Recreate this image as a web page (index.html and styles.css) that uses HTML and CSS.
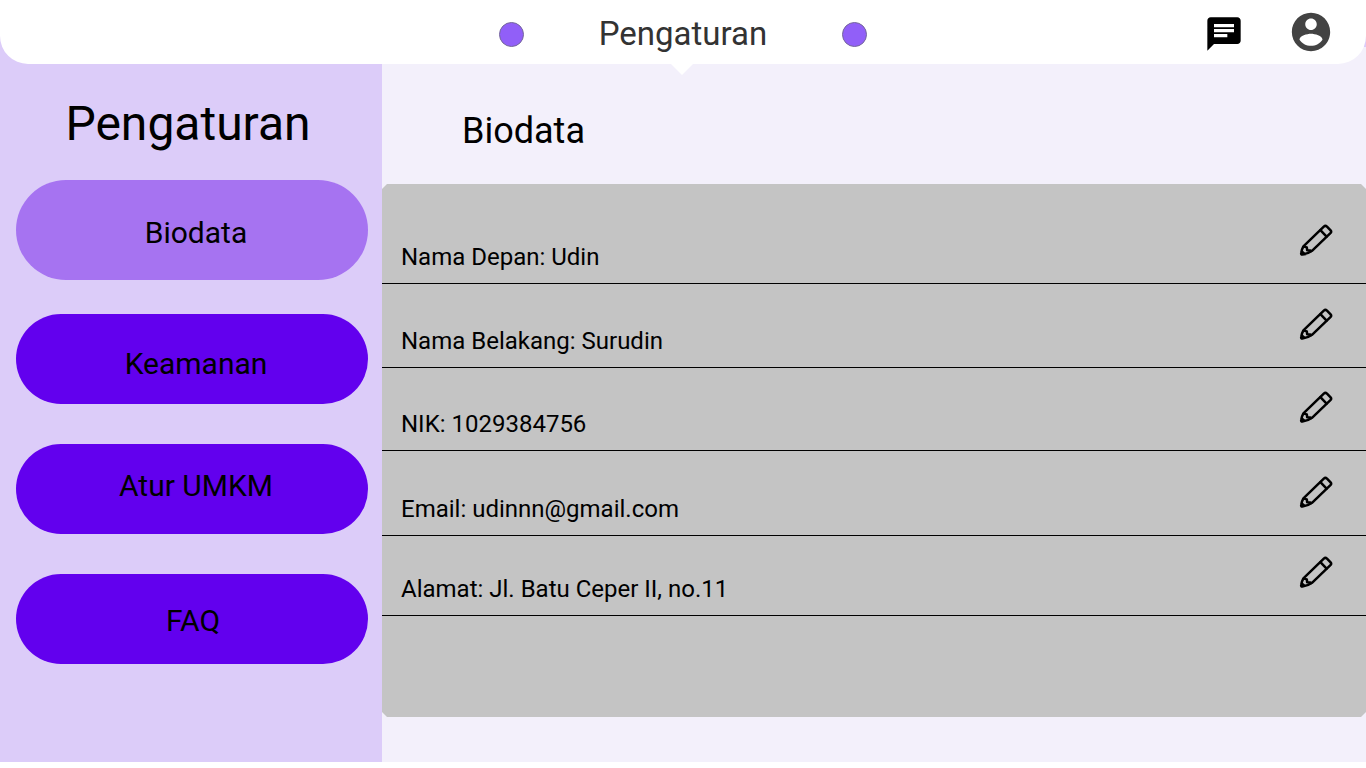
FILE: index.html
```html
<!DOCTYPE html>
<html lang="id">
<head>
<meta charset="utf-8">
<meta name="viewport" content="width=device-width, initial-scale=1">
<title>Pengaturan</title>
<link rel="stylesheet" href="styles.css">
</head>
<body>
<svg class="sprite" aria-hidden="true">
  <symbol id="pencil" viewBox="0 0 34 34">
    <g fill="none" stroke="currentColor" stroke-width="2.5" stroke-linejoin="round" stroke-linecap="round">
      <path d="M4.400 23.400 24.800 3.600Q26.400 2.200 28 3.600L31.600 7.400Q32.800 8.800 31.400 10.200L13 27.800Q8.600 31 3.400 31.600Q1.900 31.700 2.200 30Q2.600 26.600 4.400 23.400Z"/>
      <path d="M21.400 7.200 27.600 13.600M5 23.600 7.800 24.400 8.200 27.200 11.400 27.600 12 28.200"/>
    </g>
    <path d="M2 31.600 3.200 27 7 30.800Z" fill="currentColor"/>
  </symbol>
</svg>
<div class="page">
  <header class="topbar">
    <nav class="topnav" aria-label="Halaman">
      <button class="dot" type="button" aria-label="Sebelumnya"></button>
      <span class="topnav-title">Pengaturan</span>
      <button class="dot" type="button" aria-label="Berikutnya"></button>
    </nav>
    <div class="actions">
      <button class="icon-button" type="button" aria-label="Pesan">
        <svg class="icon-chat" viewBox="0 0 24 24"><path fill="currentColor" d="M20 2H4c-1.100 0-1.990.9-1.990 2L2 22l4-4h14c1.100 0 2-.9 2-2V4c0-1.100-.9-2-2-2zM6 9h12v2H6V9zm8 5H6v-2h8v2zm4-6H6V6h12v2z"/></svg>
      </button>
      <button class="icon-button" type="button" aria-label="Akun">
        <svg class="icon-account" viewBox="0 0 24 24"><path fill="currentColor" d="M12 2C6.480 2 2 6.480 2 12s4.480 10 10 10 10-4.480 10-10S17.520 2 12 2zm0 3c1.660 0 3 1.340 3 3s-1.340 3-3 3-3-1.340-3-3 1.340-3 3-3zm0 14.200c-2.500 0-4.710-1.280-6-3.220.03-1.990 4-3.080 6-3.080 1.990 0 5.970 1.090 6 3.080-1.290 1.940-3.500 3.220-6 3.220z"/></svg>
      </button>
    </div>
  </header>
  <div class="body">
    <aside class="sidebar">
      <h1 class="sidebar-title">Pengaturan</h1>
      <nav class="menu" aria-label="Pengaturan">
        <button class="menu-item menu-item-active" type="button" aria-current="page">Biodata</button>
        <button class="menu-item menu-item-low" type="button">Keamanan</button>
        <button class="menu-item menu-item-high" type="button">Atur UMKM</button>
        <button class="menu-item menu-item-short" type="button">FAQ</button>
      </nav>
    </aside>
    <main class="content">
      <h2 class="content-title">Biodata</h2>
      <ul class="panel">
        <li class="row"><span>Nama Depan: Udin</span><button class="edit" type="button" aria-label="Ubah nama depan"><svg class="icon-pencil"><use href="#pencil"/></svg></button></li>
        <li class="row"><span>Nama Belakang: Surudin</span><button class="edit" type="button" aria-label="Ubah nama belakang"><svg class="icon-pencil"><use href="#pencil"/></svg></button></li>
        <li class="row"><span>NIK: 1029384756</span><button class="edit" type="button" aria-label="Ubah NIK"><svg class="icon-pencil"><use href="#pencil"/></svg></button></li>
        <li class="row"><span>Email: udinnn@gmail.com</span><button class="edit" type="button" aria-label="Ubah email"><svg class="icon-pencil"><use href="#pencil"/></svg></button></li>
        <li class="row"><span>Alamat: Jl. Batu Ceper II, no.11</span><button class="edit" type="button" aria-label="Ubah alamat"><svg class="icon-pencil"><use href="#pencil"/></svg></button></li>
      </ul>
    </main>
  </div>
</div>
</body>
</html>
```
FILE: styles.css
```css
* { box-sizing: border-box; }

body {
  margin: 0;
  background: #fff;
  color: #000;
  font-family: Roboto, "Liberation Sans", sans-serif;
}

button {
  padding: 0;
  border: 0;
  background: none;
  color: inherit;
  font: inherit;
  cursor: pointer;
}

svg { display: block; }

.sprite {
  position: absolute;
  width: 0;
  height: 0;
}

.page { background: #dcccf9; }

.topbar {
  position: relative;
  z-index: 1;
  display: grid;
  grid-template-columns: 1fr 368px 1fr;
  align-items: center;
  height: 64px;
  background: #fff;
  border-radius: 0 0 28px 28px;
}

/* Pointer below the current page title */
.topbar::after {
  content: "";
  position: absolute;
  top: 100%;
  left: 50%;
  width: 22px;
  height: 11px;
  margin-left: -12px;
  background: #fff;
  clip-path: polygon(0 0, 100% 0, 50% 100%);
}

.topnav {
  grid-column: 2;
  display: flex;
  align-items: center;
  justify-content: space-between;
  padding-top: 4px;
}

.topnav-title {
  color: #333;
  font-size: 33px;
  line-height: 40px;
}

.dot {
  width: 25px;
  height: 25px;
  border: 1px solid #75689a;
  border-radius: 50%;
  background: #915ff8;
}

.actions {
  display: flex;
  align-items: center;
  justify-content: flex-end;
  gap: 44px;
  padding-right: 32px;
}

.icon-chat {
  width: 40px;
  height: 40px;
  margin-top: 4px;
}

.icon-account {
  width: 46px;
  height: 46px;
  color: #434343;
}

.body { display: flex; }

.sidebar {
  flex: 0 0 382px;
  padding: 32px 14px 98px 16px;
}

.sidebar-title {
  margin: 0 0 28px;
  padding-right: 8px;
  font-size: 48px;
  font-weight: 400;
  line-height: 56px;
  text-align: center;
}

.menu {
  display: flex;
  flex-direction: column;
  gap: 40px;
}

.menu-item {
  height: 90px;
  padding: 4px 0 0 8px;
  border-radius: 50px;
  background: #6200ee;
  font-size: 30px;
  line-height: 36px;
}

.menu-item-active {
  height: 100px;
  margin-bottom: -6px;
  padding-top: 6px;
  background: #a673f1;
}

.menu-item-low { padding-top: 10px; }

.menu-item-high { padding: 0 0 6px 8px; }

.menu-item-short { padding-left: 2px; }

.content {
  flex: 1;
  min-width: 0;
  margin-top: -17px;
  padding: 62px 0 45px;
  background: #f3f0fb;
}

.content-title {
  margin: 0 0 31px;
  padding-left: 80px;
  font-size: 36px;
  font-weight: 400;
  line-height: 44px;
}

.panel {
  display: grid;
  grid-template-rows: 100px 84px 83px 85px 80px;
  margin: 0;
  padding: 0 0 101px;
  list-style: none;
  background: #c4c4c4;
  clip-path: polygon(5px 0, calc(100% - 5px) 0, 100% 5px, 100% calc(100% - 5px), calc(100% - 5px) 100%, 5px 100%, 0 calc(100% - 5px), 0 5px);
}

.row {
  display: flex;
  align-items: flex-end;
  justify-content: space-between;
  padding: 0 33px 11px 19px;
  border-bottom: 1px solid #000;
  font-size: 24px;
  line-height: 30px;
}

.edit { padding-bottom: 15px; }

.icon-pencil {
  width: 34px;
  height: 34px;
}
```
